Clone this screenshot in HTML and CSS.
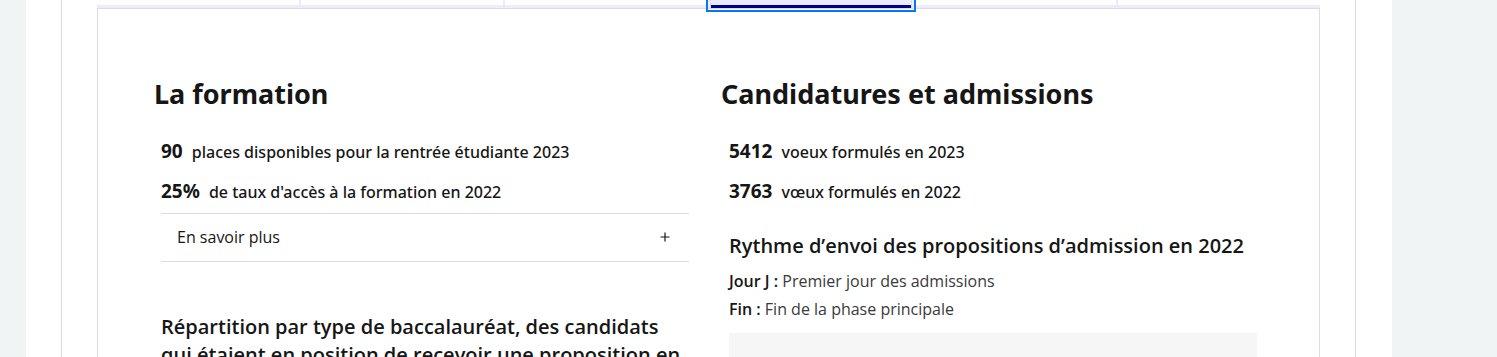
FILE: index.html
```html
<!DOCTYPE html>
<html lang="fr">
<head>
  <meta charset="UTF-8">
  <meta name="viewport" content="width=device-width, initial-scale=1.0">
  <title>Fiche formation</title>
  <link rel="stylesheet" href="styles.css">
</head>
<body>
  <div class="page">
    <div class="card">
      <div class="tabs">
        <ul class="tab-list" role="tablist">
          <li><button class="tab" role="tab" aria-label="Présentation"></button></li>
          <li><button class="tab" role="tab" aria-label="Attendus"></button></li>
          <li><button class="tab" role="tab" aria-label="Critères"></button></li>
          <li><button class="tab tab-selected" role="tab" aria-selected="true" aria-label="Chiffres"></button></li>
          <li><button class="tab" role="tab" aria-label="Contacts"></button></li>
          <li><button class="tab" role="tab" aria-label="Frais"></button></li>
        </ul>

        <div class="tab-panel">
          <div class="cols">
            <section class="col col-left">
              <h2>La formation</h2>
              <div class="col-body">
                <p class="stat"><span class="stat-num">90</span> <span class="stat-label">places disponibles pour la rentrée étudiante 2023</span></p>
                <p class="stat"><span class="stat-num">25%</span> <span class="stat-label">de taux d'accès à la formation en 2022</span></p>

                <div class="accordion">
                  <button class="accordion-btn" type="button">
                    <span>En savoir plus</span>
                    <svg class="plus" width="10" height="10" viewBox="0 0 10 10"><path d="M5 0.5v9M0.5 5h9" stroke="#161616" stroke-width="1.2" fill="none"/></svg>
                  </button>
                </div>

                <h3 class="chart-title">Répartition par type de baccalauréat, des candidats qui étaient en position de recevoir une proposition en 2022</h3>
              </div>
            </section>

            <section class="col col-right">
              <h2>Candidatures et admissions</h2>
              <div class="col-body">
                <p class="stat"><span class="stat-num">5412</span> <span class="stat-label">voeux formulés en 2023</span></p>
                <p class="stat"><span class="stat-num">3763</span> <span class="stat-label">vœux formulés en 2022</span></p>

                <h3 class="rythme-title">Rythme d’envoi des propositions d’admission en 2022</h3>
                <p class="legend"><b>Jour J :</b> Premier jour des admissions</p>
                <p class="legend"><b>Fin :</b> Fin de la phase principale</p>
                <div class="chart-box"></div>
              </div>
            </section>
          </div>
        </div>
      </div>
    </div>
  </div>
</body>
</html>
```

FILE: styles.css
```css
body {
  margin: 0;
  background-color: #f0f4f4;
  color: #161616;
  font-family: 'Open Sans', sans-serif;
  overflow: hidden;
}

.page {
  width: 1366px;
  margin-left: 26px;
  min-height: 100vh;
  background: #fff;
}

.card {
  margin-left: 35px;
  width: 1223px;
  min-height: 100vh;
  padding: 0 35px;
  border-left: 1px solid #ddd;
  border-right: 1px solid #ddd;
}

/* onglets */
.tab-list {
  display: flex;
  gap: 2px;
  margin: 0;
  padding: 0 0 3px;
  list-style: none;
  background: #ececfe;
  height: 5px;
}

.tab-list li {
  flex: 1;
}

.tab {
  display: block;
  width: 100%;
  height: 5px;
  padding: 0;
  border: none;
  background: #fff;
}

.tab-selected {
  height: 8px;
  background: #ececfe;
  box-shadow: inset 1px 0 0 #ddd, inset -1px 0 0 #ddd, inset 0 -3px 0 #000091;
  outline: 2px solid #0a76f6;
  outline-offset: 2px;
  position: relative;
}

.tab-panel {
  border: 1px solid #ddd;
  border-bottom: none;
  padding: 67px 63px 0 56px;
  min-height: 400px;
}

.cols {
  display: grid;
  grid-template-columns: 535px 536px;
  gap: 32px;
}

h2 {
  margin: 0 0 25px;
  font-family: 'Noto Sans', sans-serif;
  font-size: 27px;
  line-height: 36px;
  font-weight: 700;
}

.col-left .col-body {
  padding-left: 7px;
}

.col-right .col-body {
  padding-left: 8px;
}

.stat {
  display: flex;
  align-items: baseline;
  gap: 9px;
  margin: 0 0 11px;
  line-height: 28px;
  font-family: 'Noto Sans', sans-serif;
}

.stat-num {
  font-size: 19px;
  font-weight: 700;
}

.stat-label {
  font-size: 16px;
  font-weight: 500;
}

.accordion {
  margin-top: -4px;
  border-top: 1px solid #ddd;
  border-bottom: 1px solid #ddd;
}

.accordion-btn {
  display: flex;
  justify-content: space-between;
  align-items: center;
  width: 100%;
  padding: 11px 19px 12px 16px;
  border: none;
  background: none;
  font-family: 'Open Sans', sans-serif;
  font-size: 16px;
  line-height: 24px;
  color: #161616;
}

.chart-title {
  margin: 51px 0 0;
  font-size: 20px;
  line-height: 28px;
  font-weight: 600;
}

.rythme-title {
  margin: 26px 0 7px;
  font-size: 20px;
  line-height: 28px;
  font-weight: 600;
}

.legend {
  margin: 0;
  font-size: 16px;
  line-height: 28px;
  color: #3a3a3a;
}

.legend b {
  font-weight: 600;
  color: #161616;
}

.chart-box {
  margin-top: 10px;
  height: 200px;
  background: #f6f6f6;
}
```
